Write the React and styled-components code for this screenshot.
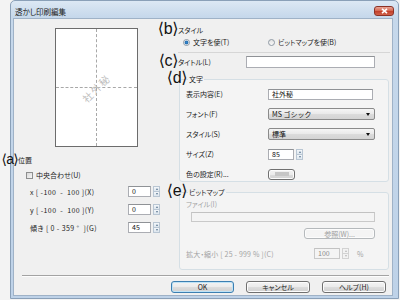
import React from 'react';
import styled, { createGlobalStyle } from 'styled-components';

const GlobalStyle = createGlobalStyle`
  html, body {
    margin: 0;
    padding: 0;
  }
  body {
    width: 400px;
    height: 300px;
    overflow: hidden;
    background: #f3f3f3;
    font-family: "Noto Sans CJK JP", sans-serif;
    color: #1c1c1c;
  }
  * {
    box-sizing: border-box;
  }
`;

const Page = styled.div`
  width: 400px;
  height: 300px;
  padding-left: 10px;
`;

const Window = styled.div`
  width: 389px;
  height: 299px;
  display: flex;
  flex-direction: column;
  border: 1px solid #8aa0b8;
  border-top-left-radius: 5px;
  border-top-right-radius: 5px;
  background: linear-gradient(#dce8f4, #c6d8eb 16px, #bed2e8);
  padding: 0 5px 2px 2px;
`;

const TitleBar = styled.div`
  height: 17px;
  display: flex;
  align-items: flex-start;
  justify-content: space-between;
  padding: 6px 0 0 2px;
`;

const Title = styled.span`
  font-size: 7.5px;
  line-height: 10px;
  color: #1a1a1a;
  font-feature-settings: "palt";
`;

const CloseButton = styled.div`
  width: 20px;
  height: 10px;
  margin-top: -1px;
  margin-right: -1px;
  border: 1px solid #8c3226;
  border-radius: 3px;
  background: linear-gradient(#e9a596, #d66b55 45%, #c3402b 55%, #d0624b);
  display: flex;
  align-items: center;
  justify-content: center;
`;

const Client = styled.div`
  flex: 1;
  display: flex;
  flex-direction: column;
  border: 1px solid #9fb2c7;
  background: #f0f0f0;
`;

const Body = styled.div`
  height: 254px;
  display: grid;
  grid-template-columns: 164px 1fr;
`;

const LeftCol = styled.div`
  display: flex;
  flex-direction: column;
  padding-top: 9px;
`;

const RightCol = styled.div`
  display: flex;
  flex-direction: column;
  padding-top: 6px;
`;

const Preview = styled.div`
  position: relative;
  margin-left: 41px;
  width: 83px;
  height: 119px;
  background: #fff;
  border: 1px solid #6c6c6c;
  display: grid;
  grid-template-columns: 1fr 1fr;
  grid-template-rows: 1fr 1fr;
`;

const Quarter = styled.div`
  border-right: ${p => (p.$right ? '1px dashed #a8a8a8' : 'none')};
  border-bottom: ${p => (p.$bottom ? '1px dashed #a8a8a8' : 'none')};
`;

const Watermark = styled.span`
  position: absolute;
  left: 50%;
  top: 50%;
  transform: translate(-52%, -46%) rotate(-45deg);
  font-size: 10px;
  line-height: 1;
  color: #bdbdbd;
  letter-spacing: 1.5px;
  white-space: nowrap;
`;

const Heading = styled.span`
  position: relative;
  align-self: flex-start;
  margin-left: ${p => p.$ml || 0}px;
  margin-top: ${p => p.$mt || 0}px;
  font-size: 7px;
  line-height: 10px;
  font-feature-settings: "palt";
  white-space: nowrap;
`;

const Annot = styled.span`
  position: absolute;
  right: 100%;
  top: 50%;
  transform: translateY(-54%);
  margin-right: ${p => p.$gap || 0}px;
  font-family: "Liberation Sans", "DejaVu Sans", sans-serif;
  font-size: ${p => p.$size || 16}px;
  letter-spacing: ${p => p.$ls ?? -0.4}px;
  line-height: 1;
  color: #111;
  white-space: nowrap;
`;

const Row = styled.div`
  display: flex;
  align-items: center;
  height: ${p => p.$h || 12}px;
  margin-top: ${p => p.$mt || 0}px;
  padding-left: ${p => p.$pl || 0}px;
`;

const Label = styled.span`
  position: relative;
  width: ${p => (p.$w ? `${p.$w}px` : 'auto')};
  margin-left: ${p => p.$ml || 0}px;
  flex-shrink: 0;
  font-size: 7px;
  line-height: 10px;
  letter-spacing: ${p => p.$ls || 0}px;
  white-space: pre;
  font-feature-settings: "palt";
  color: ${p => (p.$disabled ? '#a3a3a3' : '#1c1c1c')};
`;

const TextBox = styled.div`
  width: ${p => p.$w}px;
  height: ${p => p.$h || 11}px;
  margin-left: ${p => p.$ml || 0}px;
  margin-top: ${p => p.$mt || 0}px;
  flex-shrink: 0;
  border: 1px solid ${p => (p.$disabled ? '#c9c9c9' : '#abadb3')};
  border-top-color: ${p => (p.$disabled ? '#c2c2c2' : '#8f9296')};
  background: ${p => (p.$disabled ? '#f4f4f4' : '#fff')};
  padding-left: 3px;
  font-size: 7px;
  line-height: ${p => (p.$h || 11) - 2}px;
  color: ${p => (p.$disabled ? '#8a8a8a' : '#111')};
  white-space: nowrap;
`;

const Select = styled.div`
  width: 107px;
  height: 12px;
  display: flex;
  align-items: center;
  justify-content: space-between;
  padding: 0 4px 0 3px;
  border: 1px solid #8a8a8a;
  border-radius: 2px;
  background: linear-gradient(#f5f5f5, #e9e9e9 50%, #dcdcdc 50%, #d3d3d3);
  font-size: 7px;
  line-height: 10px;
  color: #111;
`;

const Caret = styled.span`
  width: 0;
  height: 0;
  border-left: 2.5px solid transparent;
  border-right: 2.5px solid transparent;
  border-top: 3px solid #111;
`;

const SpinBox = styled.div`
  width: 7px;
  height: 11px;
  margin-left: 2px;
  display: flex;
  flex-direction: column;
  flex-shrink: 0;
`;

const SpinHalf = styled.div`
  flex: 1;
  display: flex;
  align-items: center;
  justify-content: center;
  border: 1px solid ${p => (p.$disabled ? '#d2d2d2' : '#b9c6d3')};
  border-top-width: ${p => (p.$down ? 0 : 1)}px;
  background: ${p => (p.$disabled ? '#f2f2f2' : 'linear-gradient(#f4f7fa, #dde6ee)')};
`;

const Tri = styled.span`
  width: 0;
  height: 0;
  border-left: 1.5px solid transparent;
  border-right: 1.5px solid transparent;
  ${p =>
    p.$down
      ? `border-top: 2px solid ${p.$disabled ? '#b8b8b8' : '#5d7892'};`
      : `border-bottom: 2px solid ${p.$disabled ? '#b8b8b8' : '#5d7892'};`}
`;

const Button = styled.div`
  width: ${p => p.$w}px;
  height: ${p => p.$h || 12}px;
  margin-top: ${p => p.$mt || 0}px;
  margin-right: ${p => p.$mr || 0}px;
  align-self: ${p => p.$self || 'auto'};
  display: flex;
  align-items: center;
  justify-content: center;
  flex-shrink: 0;
  border: 1px solid ${p => (p.$default ? '#3c7fb1' : p.$disabled ? '#b5b9bc' : '#707070')};
  border-radius: 3px;
  background: ${p =>
    p.$disabled
      ? '#f4f4f4'
      : 'linear-gradient(#f3f3f3, #ebebeb 50%, #dddddd 50%, #d0d0d0)'};
  box-shadow: ${p => (p.$default ? 'inset 0 0 0 1px #bfe3f6' : 'inset 0 0 0 1px #fcfcfc')};
  font-size: 7px;
  line-height: 10px;
  font-feature-settings: "palt";
  color: ${p => (p.$disabled ? '#a0a0a0' : '#1c1c1c')};
`;

const Swatch = styled.span`
  width: 14px;
  height: 4px;
  background: #c6c6c6;
`;

const Radio = styled.span`
  width: 7px;
  height: 7px;
  margin-right: 3px;
  border-radius: 50%;
  border: 1px solid #8f9aa4;
  background: ${p =>
    p.$on
      ? 'radial-gradient(circle, #2f86cf 0, #2a6fae 1.6px, #e6eef5 2.2px)'
      : 'linear-gradient(#e2e2e2, #f8f8f8)'};
  flex-shrink: 0;
`;

const RadioItem = styled.span`
  display: flex;
  align-items: center;
  width: ${p => p.$w}px;
  font-size: 7px;
  line-height: 10px;
  font-feature-settings: "palt";
  white-space: nowrap;
`;

const CheckBox = styled.span`
  width: 7px;
  height: 7px;
  margin-right: 3px;
  border: 1px solid #8e8f8f;
  background: linear-gradient(135deg, #d9d9d9, #f6f6f6);
`;

const Rule = styled.div`
  height: 1px;
  margin: 5px 2px 0 0;
  background: #d6d6d6;
`;

const GroupBox = styled.fieldset`
  margin: ${p => p.$mt}px 3px 0 1px;
  padding: ${p => p.$pad};
  min-width: 0;
  border: 1px solid #d5dfe5;
  border-radius: 3px;
  background: #f4f4f4;
  display: flex;
  flex-direction: column;
`;

const Legend = styled.legend`
  position: relative;
  margin-left: 2px;
  padding: 0 1px;
  font-size: 7px;
  line-height: 10px;
  font-feature-settings: "palt";
  white-space: nowrap;
`;

const RowStack = styled.div`
  display: flex;
  flex-direction: column;
  gap: ${p => p.$gap}px;
`;

const Footer = styled.div`
  display: flex;
  flex-direction: column;
  padding-top: 2px;
`;

const Etched = styled.div`
  margin: 0 3px 0 8px;
  border-top: 1px solid #a3a3a3;
  border-bottom: 1px solid #fdfdfd;
`;

const ButtonBar = styled.div`
  display: flex;
  justify-content: flex-end;
  gap: 12px;
  margin-top: 4px;
  padding-right: 6px;
`;

const Spin = ({ disabled }) => (
  <SpinBox>
    <SpinHalf $disabled={disabled}>
      <Tri $disabled={disabled} />
    </SpinHalf>
    <SpinHalf $down $disabled={disabled}>
      <Tri $down $disabled={disabled} />
    </SpinHalf>
  </SpinBox>
);

const NumField = ({ label, value, mt }) => (
  <Row $h={11} $mt={mt} $pl={16}>
    <Label $w={98} $ls={0.4}>{label}</Label>
    <TextBox $w={23}>{value}</TextBox>
    <Spin />
  </Row>
);

export default function App() {
  return (
    <Page>
      <GlobalStyle />
      <Window>
        <TitleBar>
          <Title>透かし印刷編集</Title>
          <CloseButton>
            <svg width="7" height="6" viewBox="0 0 7 6">
              <path d="M1 0.8 L6 5.2 M6 0.8 L1 5.2" stroke="#fff" strokeWidth="1.6" />
            </svg>
          </CloseButton>
        </TitleBar>
        <Client>
          <Body>
            <LeftCol>
              <Preview>
                <Quarter $right $bottom />
                <Quarter $bottom />
                <Quarter $right />
                <Quarter />
                <Watermark>社外秘</Watermark>
              </Preview>
              <Heading $ml={4} $mt={8}>
                <Annot $size={14} $ls={-0.7}>⟨a⟩</Annot>位置
              </Heading>
              <Row $h={10} $mt={5} $pl={12}>
                <CheckBox />
                <Label>中央合わせ(U)</Label>
              </Row>
              <NumField label="x [ -100  -  100 ](X)" value="0" mt={6} />
              <NumField label="y [ -100  -  100 ](Y)" value="0" mt={7} />
              <NumField label="傾き [ 0 - 359 °  ](G)" value="45" mt={7} />
            </LeftCol>

            <RightCol>
              <Heading>
                <Annot>⟨b⟩</Annot>スタイル
              </Heading>
              <Row $h={10} $mt={2} $pl={5}>
                <RadioItem $w={85}>
                  <Radio $on />
                  文字を使(T)
                </RadioItem>
                <RadioItem>
                  <Radio />
                  ビットマップを使(B)
                </RadioItem>
              </Row>
              <Rule />
              <Row $mt={3}>
                <Label $w={68}>
                  <Annot>⟨c⟩</Annot>タイトル(L)
                </Label>
                <TextBox $w={129} $h={12} />
              </Row>

              <GroupBox $mt={6} $pad="4px 0 1px 6px">
                <Legend>
                  <Annot $gap={1}>⟨d⟩</Annot>文字
                </Legend>
                <RowStack $gap={8}>
                  <Row>
                    <Label $w={82}>表示内容(E)</Label>
                    <TextBox $w={105}>社外秘</TextBox>
                  </Row>
                  <Row>
                    <Label $w={82}>フォント(F)</Label>
                    <Select>
                      MS ゴシック
                      <Caret />
                    </Select>
                  </Row>
                  <Row>
                    <Label $w={82}>スタイル(S)</Label>
                    <Select>
                      標準
                      <Caret />
                    </Select>
                  </Row>
                  <Row>
                    <Label $w={82}>サイズ(Z)</Label>
                    <TextBox $w={26}>85</TextBox>
                    <Spin />
                  </Row>
                  <Row>
                    <Label $w={82}>色の設定(R)...</Label>
                    <Button $w={27} $h={11}>
                      <Swatch />
                    </Button>
                  </Row>
                </RowStack>
              </GroupBox>

              <GroupBox $mt={5} $pad="2px 12px 10px 6px">
                <Legend>
                  <Annot $gap={1}>⟨e⟩</Annot>ビットマップ
                </Legend>
                <Label $disabled>ファイル(I)</Label>
                <TextBox $w={184} $h={10} $ml={5} $mt={3} $disabled />
                <Button $w={71} $h={11} $mt={6} $mr={1} $self="flex-end" $disabled>
                  参照(W)...
                </Button>
                <Row $h={11} $mt={9}>
                  <Label $w={128} $ls={0.2} $disabled>
                    拡大・縮小 [ 25 - 999 % ](C)
                  </Label>
                  <TextBox $w={26} $disabled>
                    100
                  </TextBox>
                  <Spin disabled />
                  <Label $disabled $ml={8}>%</Label>
                </Row>
              </GroupBox>
            </RightCol>
          </Body>

          <Footer>
            <Etched />
            <ButtonBar>
              <Button $w={63} $default>OK</Button>
              <Button $w={64}>キャンセル</Button>
              <Button $w={64}>ヘルプ(H)</Button>
            </ButtonBar>
          </Footer>
        </Client>
      </Window>
    </Page>
  );
}
